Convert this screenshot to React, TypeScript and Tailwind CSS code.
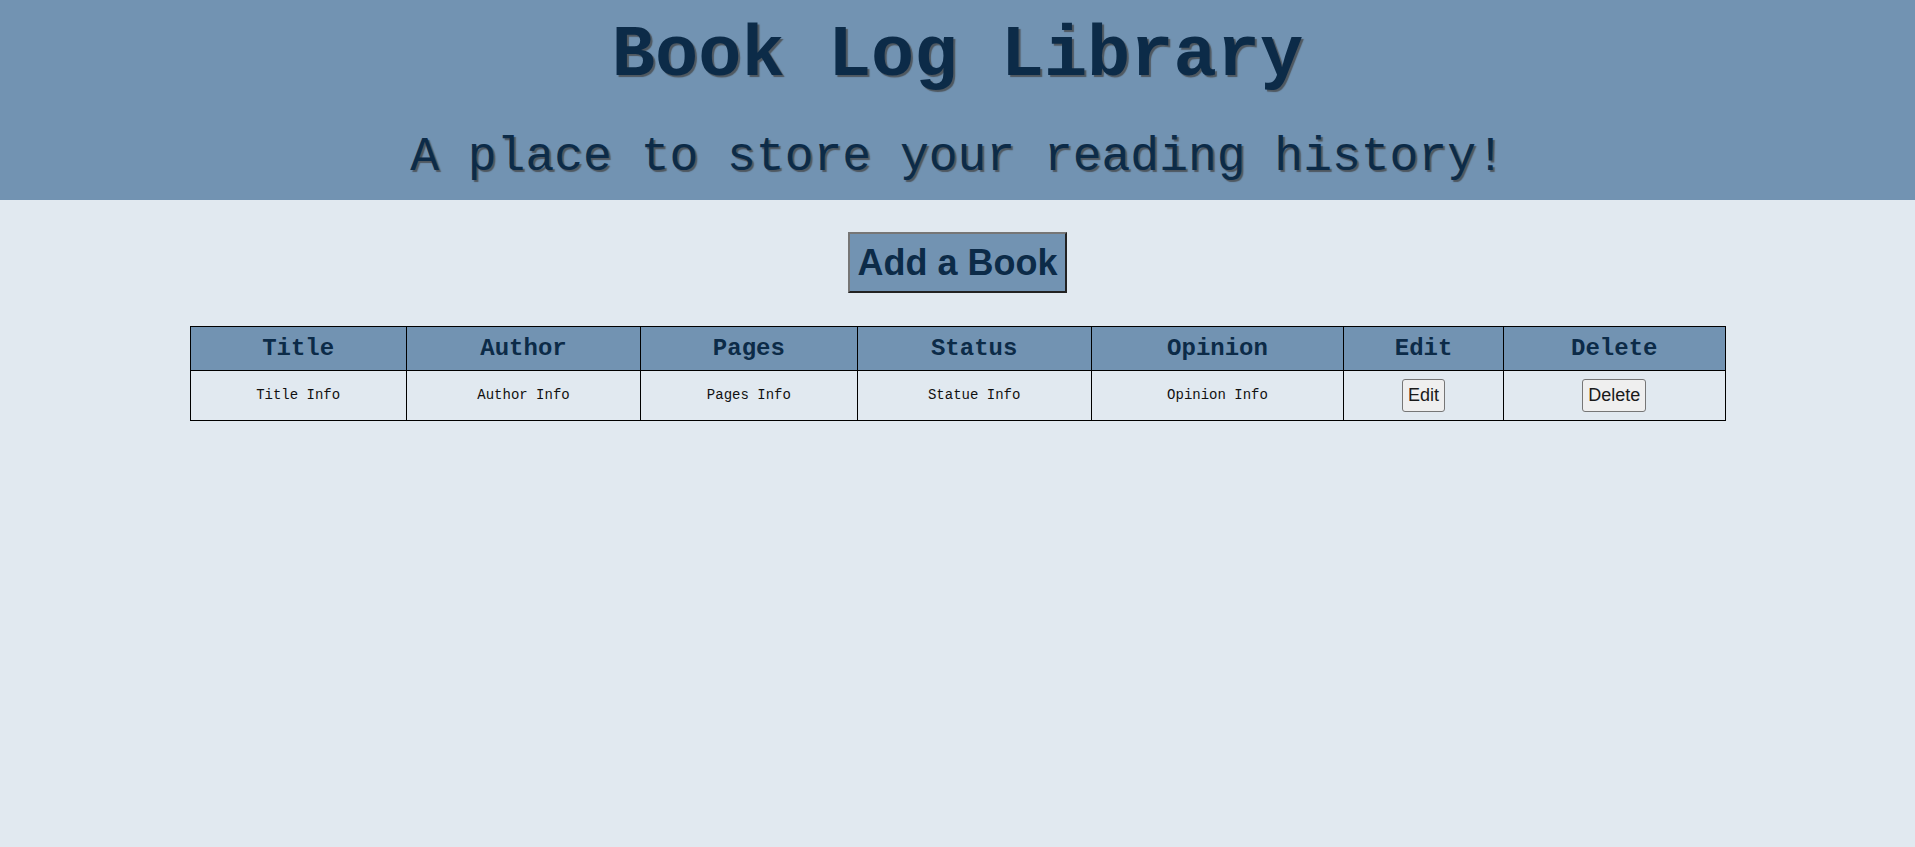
import React from "react";

const rows = [
  {
    title: "Title Info",
    author: "Author Info",
    pages: "Pages Info",
    status: "Statue Info",
    opinion: "Opinion Info",
  },
];

const headers = ["Title", "Author", "Pages", "Status", "Opinion", "Edit", "Delete"];

export default function App() {
  return (
    <div className="min-h-[847px] bg-[#e1e9f0] font-['Liberation_Mono',monospace]">
      <header className="bg-[#7293b2] text-center text-[#0c2b48] pt-[15px] pb-[16px]">
        <h1 className="text-[72px] leading-[82px] font-bold [text-shadow:2px_2px_1px_#4f5860]">
          Book Log Library
        </h1>
        <h2 className="mt-[33px] text-[48px] leading-[54px] font-normal [text-shadow:2px_2px_1px_#4f5860]">
          A place to store your reading history!
        </h2>
      </header>
      <main className="flex flex-col items-center">
        <button className="mt-[32px] bg-[#7293b2] text-[#0c2b48] font-['Liberation_Sans',Arial,sans-serif] font-bold text-[36px] leading-[41px] px-[7px] py-[8px] border-2 border-t-[#767676] border-l-[#767676] border-b-[#222222] border-r-[#222222]">
          Add a Book
        </button>
        <table className="mt-[33px] w-[1536px] border-collapse border border-black">
          <thead>
            <tr className="bg-[#7293b2]">
              {headers.map((h) => (
                <th
                  key={h}
                  className="border border-black p-2 text-[24px] leading-[27px] font-bold text-[#0c2b48]"
                >
                  {h}
                </th>
              ))}
            </tr>
          </thead>
          <tbody>
            {rows.map((r, i) => (
              <tr key={i} className="text-[14px] text-[#111111] text-center">
                <td className="border border-black p-2">{r.title}</td>
                <td className="border border-black p-2">{r.author}</td>
                <td className="border border-black p-2">{r.pages}</td>
                <td className="border border-black p-2">{r.status}</td>
                <td className="border border-black p-2">{r.opinion}</td>
                <td className="border border-black p-2">
                  <button className="bg-[#efefef] border border-[#767676] rounded-[3px] px-[5px] py-[5px] font-['Liberation_Sans',Arial,sans-serif] text-[18px] leading-[21px] text-[#1a1a1a]">
                    Edit
                  </button>
                </td>
                <td className="border border-black p-2">
                  <button className="bg-[#efefef] border border-[#767676] rounded-[3px] px-[5px] py-[5px] font-['Liberation_Sans',Arial,sans-serif] text-[18px] leading-[21px] text-[#1a1a1a]">
                    Delete
                  </button>
                </td>
              </tr>
            ))}
          </tbody>
        </table>
      </main>
    </div>
  );
}
